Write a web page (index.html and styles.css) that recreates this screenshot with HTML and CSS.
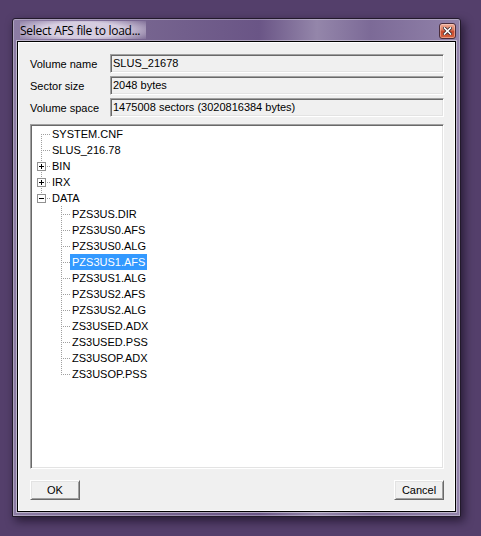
FILE: index.html
```html
<!DOCTYPE html>
<html>
<head>
<meta charset="utf-8">
<title>Select AFS file to load...</title>
<link rel="stylesheet" href="styles.css">
</head>
<body>
<div class="desktop">
  <div class="window">
    <div class="titlebar">
      <span class="title">Select AFS file to load...</span>
      <button class="close" type="button" aria-label="Close">
        <svg width="9" height="8" viewBox="0 0 9 8"><path d="M1.5 1L7.5 7M7.5 1L1.5 7" stroke="#3a2a30" stroke-width="3.2" stroke-linecap="square"/><path d="M1.5 1L7.5 7M7.5 1L1.5 7" stroke="#fff" stroke-width="1.6" stroke-linecap="square"/></svg>
      </button>
    </div>
    <div class="frame">
      <div class="client">
        <div class="fields">
          <div class="field-row"><span class="field-label">Volume name</span><div class="field">SLUS_21678</div></div>
          <div class="field-row"><span class="field-label">Sector size</span><div class="field">2048 bytes</div></div>
          <div class="field-row"><span class="field-label">Volume space</span><div class="field">1475008 sectors (3020816384 bytes)</div></div>
        </div>
        <div class="tree">
          <ul class="branch">
            <li class="item first"><div class="node"><span class="label">SYSTEM.CNF</span></div></li>
            <li class="item"><div class="node"><span class="label">SLUS_216.78</span></div></li>
            <li class="item"><div class="node"><svg class="expander" width="9" height="9" viewBox="0 0 9 9"><rect x="0.5" y="0.5" width="8" height="8" fill="#fff" stroke="#919191"/><path d="M2 4.5h5M4.5 2v5" stroke="#000"/></svg><span class="label">BIN</span></div></li>
            <li class="item"><div class="node"><svg class="expander" width="9" height="9" viewBox="0 0 9 9"><rect x="0.5" y="0.5" width="8" height="8" fill="#fff" stroke="#919191"/><path d="M2 4.5h5M4.5 2v5" stroke="#000"/></svg><span class="label">IRX</span></div></li>
            <li class="item last"><div class="node"><svg class="expander" width="9" height="9" viewBox="0 0 9 9"><rect x="0.5" y="0.5" width="8" height="8" fill="#fff" stroke="#919191"/><path d="M2 4.5h5" stroke="#000"/></svg><span class="label">DATA</span></div>
              <ul class="branch">
                <li class="item"><div class="node"><span class="label">PZS3US.DIR</span></div></li>
                <li class="item"><div class="node"><span class="label">PZS3US0.AFS</span></div></li>
                <li class="item"><div class="node"><span class="label">PZS3US0.ALG</span></div></li>
                <li class="item"><div class="node"><span class="label selected">PZS3US1.AFS</span></div></li>
                <li class="item"><div class="node"><span class="label">PZS3US1.ALG</span></div></li>
                <li class="item"><div class="node"><span class="label">PZS3US2.AFS</span></div></li>
                <li class="item"><div class="node"><span class="label">PZS3US2.ALG</span></div></li>
                <li class="item"><div class="node"><span class="label">ZS3USED.ADX</span></div></li>
                <li class="item"><div class="node"><span class="label">ZS3USED.PSS</span></div></li>
                <li class="item"><div class="node"><span class="label">ZS3USOP.ADX</span></div></li>
                <li class="item last"><div class="node"><span class="label">ZS3USOP.PSS</span></div></li>
              </ul>
            </li>
          </ul>
        </div>
        <div class="buttons">
          <button class="btn" type="button">OK</button>
          <button class="btn" type="button">Cancel</button>
        </div>
      </div>
    </div>
  </div>
</div>
</body>
</html>
```

FILE: styles.css
```css
html, body {
  margin: 0;
  padding: 0;
}

body {
  width: 481px;
  height: 536px;
  overflow: hidden;
  background: #543f6b;
  font-family: "Liberation Sans", Arial, sans-serif;
  font-size: 11px;
  color: #000;
}

.desktop {
  padding: 18px 0 0 12px;
}

.window {
  width: 449px;
  height: 499px;
  box-sizing: border-box;
  border: 1px solid #231a2c;
  border-radius: 3px 3px 0 0;
  background: linear-gradient(to right, #8c7ca4 0%, #76648f 30%, #6a5586 55%, #9486aa 68%, #7c6a97 80%, #9283aa 100%);
  box-shadow: 3px 4px 10px rgba(10, 4, 18, 0.6), inset 0 0 0 1px rgba(255, 255, 255, 0.3);
  display: flex;
  flex-direction: column;
}

.titlebar {
  height: 22px;
  flex: none;
  display: flex;
  justify-content: space-between;
  align-items: center;
  padding: 0 4px 0 7px;
}

.title {
  font-family: "Open Sans", "Liberation Sans", sans-serif;
  font-size: 12px;
  letter-spacing: -0.3px;
  color: #000;
  padding: 1px 6px 0 0;
  background: radial-gradient(ellipse at center, rgba(235, 228, 242, 0.8) 35%, rgba(235, 228, 242, 0) 72%);
  background-size: 130% 170%;
  background-position: center;
}

.close {
  align-self: flex-start;
  margin-top: 4px;
  width: 17px;
  height: 16px;
  padding: 0;
  box-sizing: border-box;
  border: 1px solid #4a2d3c;
  border-radius: 3px;
  background: linear-gradient(to bottom, #eeb09c 0%, #dc7b5f 40%, #c8482c 55%, #d4633f 100%);
  box-shadow: inset 0 0 0 1px rgba(255, 220, 210, 0.45);
  display: flex;
  align-items: center;
  justify-content: center;
}

.close svg {
  display: block;
}

.frame {
  flex: 1;
  display: flex;
  flex-direction: column;
  padding: 0 4px 4px 4px;
}

.client {
  flex: 1;
  display: flex;
  flex-direction: column;
  border: 1px solid #000;
  background: #f0f0f0;
  box-shadow: 0 0 0 1px rgba(255, 255, 255, 0.45), inset 0 0 0 1px #fff;
  padding: 12px 11px 11px 12px;
}

.fields {
  display: flex;
  flex-direction: column;
  gap: 3px;
}

.field-row {
  display: flex;
  align-items: center;
  height: 19px;
}

.field-label {
  width: 80px;
  flex: none;
}

.field {
  flex: 1;
  height: 19px;
  box-sizing: border-box;
  border: 1px solid;
  border-color: #a0a0a0 #fff #fff #a0a0a0;
  box-shadow: inset 1px 1px 0 #696969, inset -1px -1px 0 #e3e3e3;
  background: #f0f0f0;
  padding: 0 0 0 2px;
  line-height: 17px;
  white-space: nowrap;
}

.tree {
  flex: 1;
  margin: 7px 0 11px;
  box-sizing: border-box;
  border: 1px solid;
  border-color: #a0a0a0 #fff #fff #a0a0a0;
  box-shadow: inset 1px 1px 0 #696969, inset -1px -1px 0 #e3e3e3;
  background: #fff;
  padding: 1px;
  overflow: hidden;
}

.branch {
  list-style: none;
  margin: 0;
  padding: 0;
}

.branch .branch {
  margin-left: 20px;
}

.item {
  position: relative;
}

.item::before {
  content: "";
  position: absolute;
  left: 9px;
  top: 0;
  bottom: 0;
  width: 1px;
  background: repeating-linear-gradient(to bottom, #a0a0a0 0 1px, transparent 1px 2px);
}

.item.first::before {
  top: 8px;
}

.item.last::before {
  bottom: auto;
  height: 9px;
}

.node {
  position: relative;
  height: 16px;
  line-height: 16px;
  padding-left: 18px;
  display: flex;
  align-items: center;
}

.node::before {
  content: "";
  position: absolute;
  left: 11px;
  top: 8px;
  width: 7px;
  height: 1px;
  background: repeating-linear-gradient(to right, #a0a0a0 0 1px, transparent 1px 2px);
}

.expander {
  position: absolute;
  left: 5px;
  top: 4px;
  z-index: 1;
}

.label {
  height: 16px;
  padding: 0 2px;
  white-space: nowrap;
}

.label.selected {
  background: #3399ff;
  color: #fff;
}

.buttons {
  display: flex;
  justify-content: space-between;
  height: 20px;
  flex: none;
}

.btn {
  width: 50px;
  height: 20px;
  box-sizing: border-box;
  padding: 0;
  margin: 0;
  font-family: "Liberation Sans", Arial, sans-serif;
  font-size: 11px;
  color: #000;
  background: #f0f0f0;
  border: 1px solid;
  border-color: #fff #696969 #696969 #fff;
  box-shadow: inset 1px 1px 0 #e3e3e3, inset -1px -1px 0 #a0a0a0;
  border-radius: 0;
}
```
